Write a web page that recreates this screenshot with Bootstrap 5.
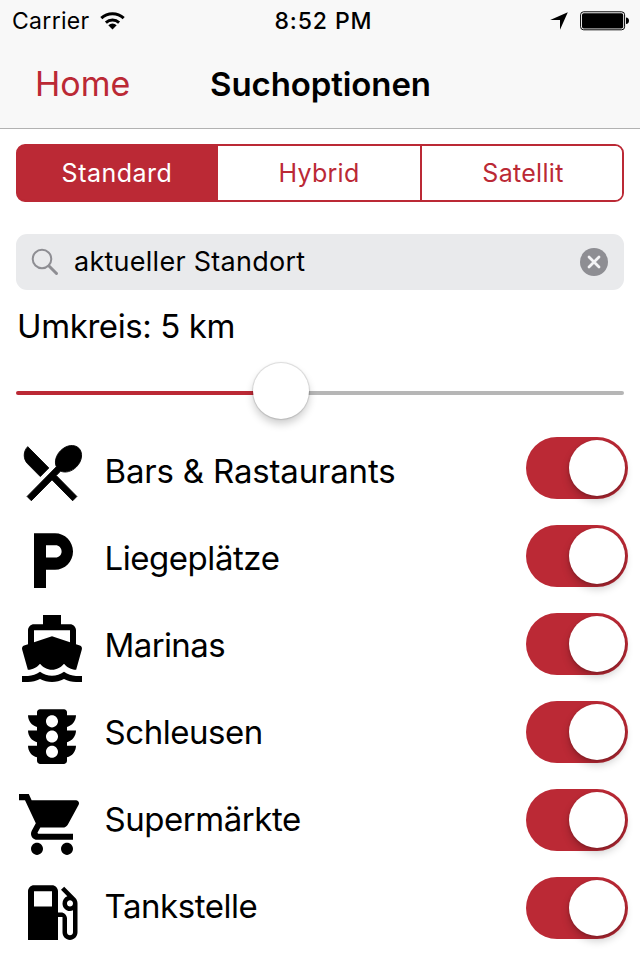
<!DOCTYPE html>
<html lang="de">
<head>
<meta charset="utf-8">
<meta name="viewport" content="width=device-width, initial-scale=1">
<title>Suchoptionen</title>
<link href="https://cdn.jsdelivr.net/npm/bootstrap@5.3.0/dist/css/bootstrap.min.css" rel="stylesheet">
<style>
  :root { --accent: #bb2935; }
  body { font-family: Inter, "Liberation Sans", sans-serif; color: #000; background: #fff; width: 640px; height: 960px; overflow: hidden; }
  svg { display: block; flex: none; }
  .top-area { height: 129px; background: #f8f8f8; border-bottom: 1px solid #b2b2b2; }
  .status-row { height: 42px; padding: 0 10px 0 12px; font-size: 23px; line-height: 42px; }
  .side { flex: 1 1 0; }
  .carrier-name { letter-spacing: .3px; }
  .clock { font-weight: 500; letter-spacing: .9px; padding-left: 5px; }
  .title-row { height: 86px; padding: 0 34px 0 35px; line-height: 84px; }
  .home-link { font-size: 34px; color: var(--accent); text-decoration: none; }
  .page-title { font-size: 33px; font-weight: 600; line-height: inherit; letter-spacing: -.1px; }
  .segments { height: 58px; margin: 15px 16px 0; border: 2px solid var(--accent); border-radius: 9px; overflow: hidden; background: linear-gradient(90deg, var(--accent) 100px, #fff 100px); }
  .segments .btn { border: 0; border-radius: 0; padding: 0; color: var(--accent); background: #fff; font-size: 25px; line-height: 54px; flex: 1 1 0; letter-spacing: .3px; }
  .segments .btn + .btn { border-left: 2px solid var(--accent); }
  .segments .btn:nth-child(2) { flex: 0 0 204px; }
  .segments .btn:nth-child(3) { padding-left: 2px; }
  .segments .btn.active { background: var(--accent); color: #fff; flex: 0 0 198px; letter-spacing: .5px; }
  .search-field { height: 56px; margin: 32px 16px 0; padding: 0 16px 0 15px; background: #e9eaec; border-radius: 11px; font-size: 27px; line-height: 55px; }
  .search-text { margin: -2px 0 0 15px; letter-spacing: .26px; }
  .radius-label { margin: 15px 0 0 17px; font-size: 33px; line-height: 42px; letter-spacing: -.4px; }
  .slider { height: 56px; margin: 16px 16px 0; }
  .track { height: 4px; border-radius: 2px; background: #b6b6b6; margin-top: 4px; }
  .track-on { width: 240px; background: var(--accent); }
  .knob { width: 56px; height: 56px; border-radius: 50%; background: #fff; flex: none; }
  .slider .knob { margin: 0 -3px; z-index: 1; box-shadow: 0 0 1px 1px rgba(0,0,0,.13), 0 5px 8px rgba(0,0,0,.2); }
  .options { padding: 18px 12px 0 16px; }
  .option { height: 88px; }
  .option > svg { width: 72px; height: 73px; margin-top: -1px; }
  .option-name { font-size: 33px; line-height: 62px; margin: 3px 0 0 16.500px; letter-spacing: -.45px; }
  .option:nth-child(1) .option-name { letter-spacing: -.18px; }
  .option:nth-child(2) .option-name { margin-top: 2px; }
  .option:nth-child(3) .option-name { margin-top: 1px; letter-spacing: -.6px; }
  .option:nth-child(4) .option-name { margin-top: 0; }
  .option:nth-child(5) .option-name { margin-top: -1px; }
  .option:nth-child(6) .option-name { margin-top: -2px; }
  .toggle { width: 102px; height: 62px; border-radius: 31px; padding: 3px; background: var(--accent); }
  .toggle .knob { box-shadow: 0 5px 8px rgba(0,0,0,.2), 0 1px 3px rgba(0,0,0,.2); }
</style>
</head>
<body>
<header class="top-area">
  <div class="status-row d-flex align-items-center">
    <div class="side d-flex align-items-center">
      <span class="carrier-name">Carrier</span>
      <svg width="28" height="20" viewBox="0 0 28 20" style="margin-left:9px"><g fill="none" stroke="#000" stroke-width="3"><path d="M2.300 7.100a16.500 16.500 0 0 1 22.400 0"/><path d="M6.900 11.600a10 10 0 0 1 13.200 0"/></g><path d="M9.300 14.200a6.500 6.500 0 0 1 8.400 0L13.500 18.500z"/></svg>
    </div>
    <span class="clock">8:52 PM</span>
    <div class="side d-flex align-items-center justify-content-end">
      <svg width="18" height="18" viewBox="0 0 18 18"><path d="M17.800.2 10 17.800V8H.2z"/></svg>
      <svg width="50" height="20" viewBox="0 0 50 20" style="margin-left:12px"><rect x=".6" y=".8" width="44" height="18" rx="3" fill="#fff" stroke="#000"/><rect x="2" y="2.200" width="41.200" height="15.200" rx="1.700"/><path d="M46 6.500c4 0 4 6.500 0 6.500z"/></svg>
    </div>
  </div>
  <nav class="title-row d-flex">
    <div class="side"><a class="home-link" href="#">Home</a></div>
    <h1 class="page-title m-0">Suchoptionen</h1>
    <div class="side"></div>
  </nav>
</header>
<main>
  <div class="segments d-flex" role="group">
    <button class="btn active" type="button">Standard</button>
    <button class="btn" type="button">Hybrid</button>
    <button class="btn" type="button">Satellit</button>
  </div>
  <div class="search-field d-flex align-items-center">
    <svg width="28" height="28" viewBox="0 0 28 28" fill="none" stroke="#8e8e93"><circle cx="11" cy="11" r="9.300" stroke-width="2"/><path d="m18 18 7.500 7.500" stroke-width="3" stroke-linecap="round"/></svg>
    <span class="search-text">aktueller Standort</span>
    <svg class="ms-auto" width="28" height="28" viewBox="0 0 28 28"><circle cx="14" cy="14" r="14" fill="#8e8e93"/><path d="m9 9 10 10M19 9 9 19" stroke="#f4f4f6" stroke-width="2.800" stroke-linecap="round"/></svg>
  </div>
  <div class="radius-label"><span>Umkreis: 5 km</span></div>
  <div class="slider d-flex align-items-center">
    <div class="track track-on"></div><div class="knob"></div><div class="track flex-grow-1"></div>
  </div>
  <div class="options">
    <div class="option d-flex align-items-start">
      <svg viewBox="0 0 24 24" preserveAspectRatio="none"><path stroke="#000" stroke-width=".3" d="M8.100 13.340l2.830-2.830L3.910 3.500c-1.560 1.560-1.560 4.090 0 5.660l4.190 4.180zm6.780-1.810c1.530.71 3.680.21 5.270-1.380 1.910-1.910 2.280-4.650.81-6.120-1.460-1.460-4.200-1.100-6.120.81-1.590 1.590-2.090 3.740-1.380 5.270L3.700 19.870l1.410 1.410L12 14.410l6.880 6.880 1.410-1.410L13.410 13l1.470-1.470z"/></svg>
      <span class="option-name">Bars &amp; Rastaurants</span>
      <div class="toggle d-flex justify-content-end ms-auto"><div class="knob"></div></div>
    </div>
    <div class="option d-flex align-items-start">
      <svg viewBox="0 0 24 24" preserveAspectRatio="none"><path d="M13 3H6v18h4v-6h3c3.310 0 6-2.690 6-6s-2.690-6-6-6zm.2 8H10V7h3.200c1.100 0 2 .9 2 2s-.9 2-2 2z"/></svg>
      <span class="option-name">Liegeplätze</span>
      <div class="toggle d-flex justify-content-end ms-auto"><div class="knob"></div></div>
    </div>
    <div class="option d-flex align-items-start">
      <svg viewBox="0 0 24 24" preserveAspectRatio="none"><path d="M20 21c-1.390 0-2.780-.47-4-1.320-2.440 1.710-5.560 1.710-8 0C6.780 20.530 5.390 21 4 21H2v2h2c1.380 0 2.740-.35 4-.99 2.520 1.290 5.480 1.290 8 0 1.260.65 2.620.99 4 .99h2v-2h-2zM3.950 19H4c1.600 0 3.020-.88 4-2 .98 1.120 2.400 2 4 2s3.020-.88 4-2c.98 1.120 2.400 2 4 2h.05l1.890-6.680c.08-.26.06-.54-.06-.78s-.34-.42-.6-.5L20 10.620V6c0-1.100-.9-2-2-2h-3V1H9v3H6c-1.100 0-2 .9-2 2v4.620l-1.290.42c-.26.08-.48.26-.6.5s-.15.52-.06.78L3.950 19zM6 6h12v3.970L12 8 6 9.970V6z"/></svg>
      <span class="option-name">Marinas</span>
      <div class="toggle d-flex justify-content-end ms-auto"><div class="knob"></div></div>
    </div>
    <div class="option d-flex align-items-start">
      <svg viewBox="0 0 24 24" preserveAspectRatio="none"><path d="M20 10h-3V8.860c1.720-.45 3-2 3-3.860h-3V4c0-.55-.45-1-1-1H8c-.55 0-1 .45-1 1v1H4c0 1.860 1.280 3.410 3 3.860V10H4c0 1.860 1.280 3.410 3 3.860V15H4c0 1.860 1.280 3.410 3 3.860V20c0 .55.45 1 1 1h8c.55 0 1-.45 1-1v-1.140c1.720-.45 3-2 3-3.860h-3v-1.140c1.720-.45 3-2 3-3.860zm-8 9c-1.110 0-2-.9-2-2s.89-2 2-2c1.100 0 2 .9 2 2s-.89 2-2 2zm0-5c-1.110 0-2-.9-2-2s.89-2 2-2c1.100 0 2 .9 2 2s-.89 2-2 2zm0-5c-1.110 0-2-.9-2-2 0-1.110.89-2 2-2 1.100 0 2 .89 2 2 0 1.100-.89 2-2 2z"/></svg>
      <span class="option-name">Schleusen</span>
      <div class="toggle d-flex justify-content-end ms-auto"><div class="knob"></div></div>
    </div>
    <div class="option d-flex align-items-start">
      <svg viewBox="0 0 24 24" preserveAspectRatio="none"><path d="M7 18c-1.100 0-1.990.9-1.990 2S5.900 22 7 22s2-.9 2-2-.9-2-2-2zM1 2v2h2l3.600 7.590-1.350 2.450c-.16.28-.25.61-.25.96 0 1.100.9 2 2 2h12v-2H7.420c-.14 0-.25-.11-.25-.25l.03-.12.9-1.630h7.450c.75 0 1.410-.41 1.750-1.030l3.580-6.490c.08-.14.12-.31.12-.48 0-.55-.45-1-1-1H5.210l-.94-2H1zm16 16c-1.100 0-1.990.9-1.990 2s.89 2 1.990 2 2-.9 2-2-.9-2-2-2z"/></svg>
      <span class="option-name">Supermärkte</span>
      <div class="toggle d-flex justify-content-end ms-auto"><div class="knob"></div></div>
    </div>
    <div class="option d-flex align-items-start">
      <svg viewBox="0 0 24 24" preserveAspectRatio="none"><path d="M19.770 7.230l.01-.01-3.720-3.720L15 4.560l2.110 2.110c-.94.36-1.610 1.260-1.610 2.330 0 1.380 1.120 2.500 2.500 2.500.36 0 .69-.08 1-.21v7.210c0 .55-.45 1-1 1s-1-.45-1-1V14c0-1.100-.9-2-2-2h-1V5c0-1.100-.9-2-2-2H6c-1.100 0-2 .9-2 2v16h10v-7.500h1.500v5c0 1.380 1.120 2.500 2.500 2.500s2.500-1.120 2.500-2.500V9c0-.69-.28-1.320-.73-1.770zM12 10H6V5h6v5zm6 0c-.55 0-1-.45-1-1s.45-1 1-1 1 .45 1 1-.45 1-1 1z"/></svg>
      <span class="option-name">Tankstelle</span>
      <div class="toggle d-flex justify-content-end ms-auto"><div class="knob"></div></div>
    </div>
  </div>
</main>
<script src="https://cdn.jsdelivr.net/npm/bootstrap@5.3.0/dist/js/bootstrap.bundle.min.js"></script>
</body>
</html>
